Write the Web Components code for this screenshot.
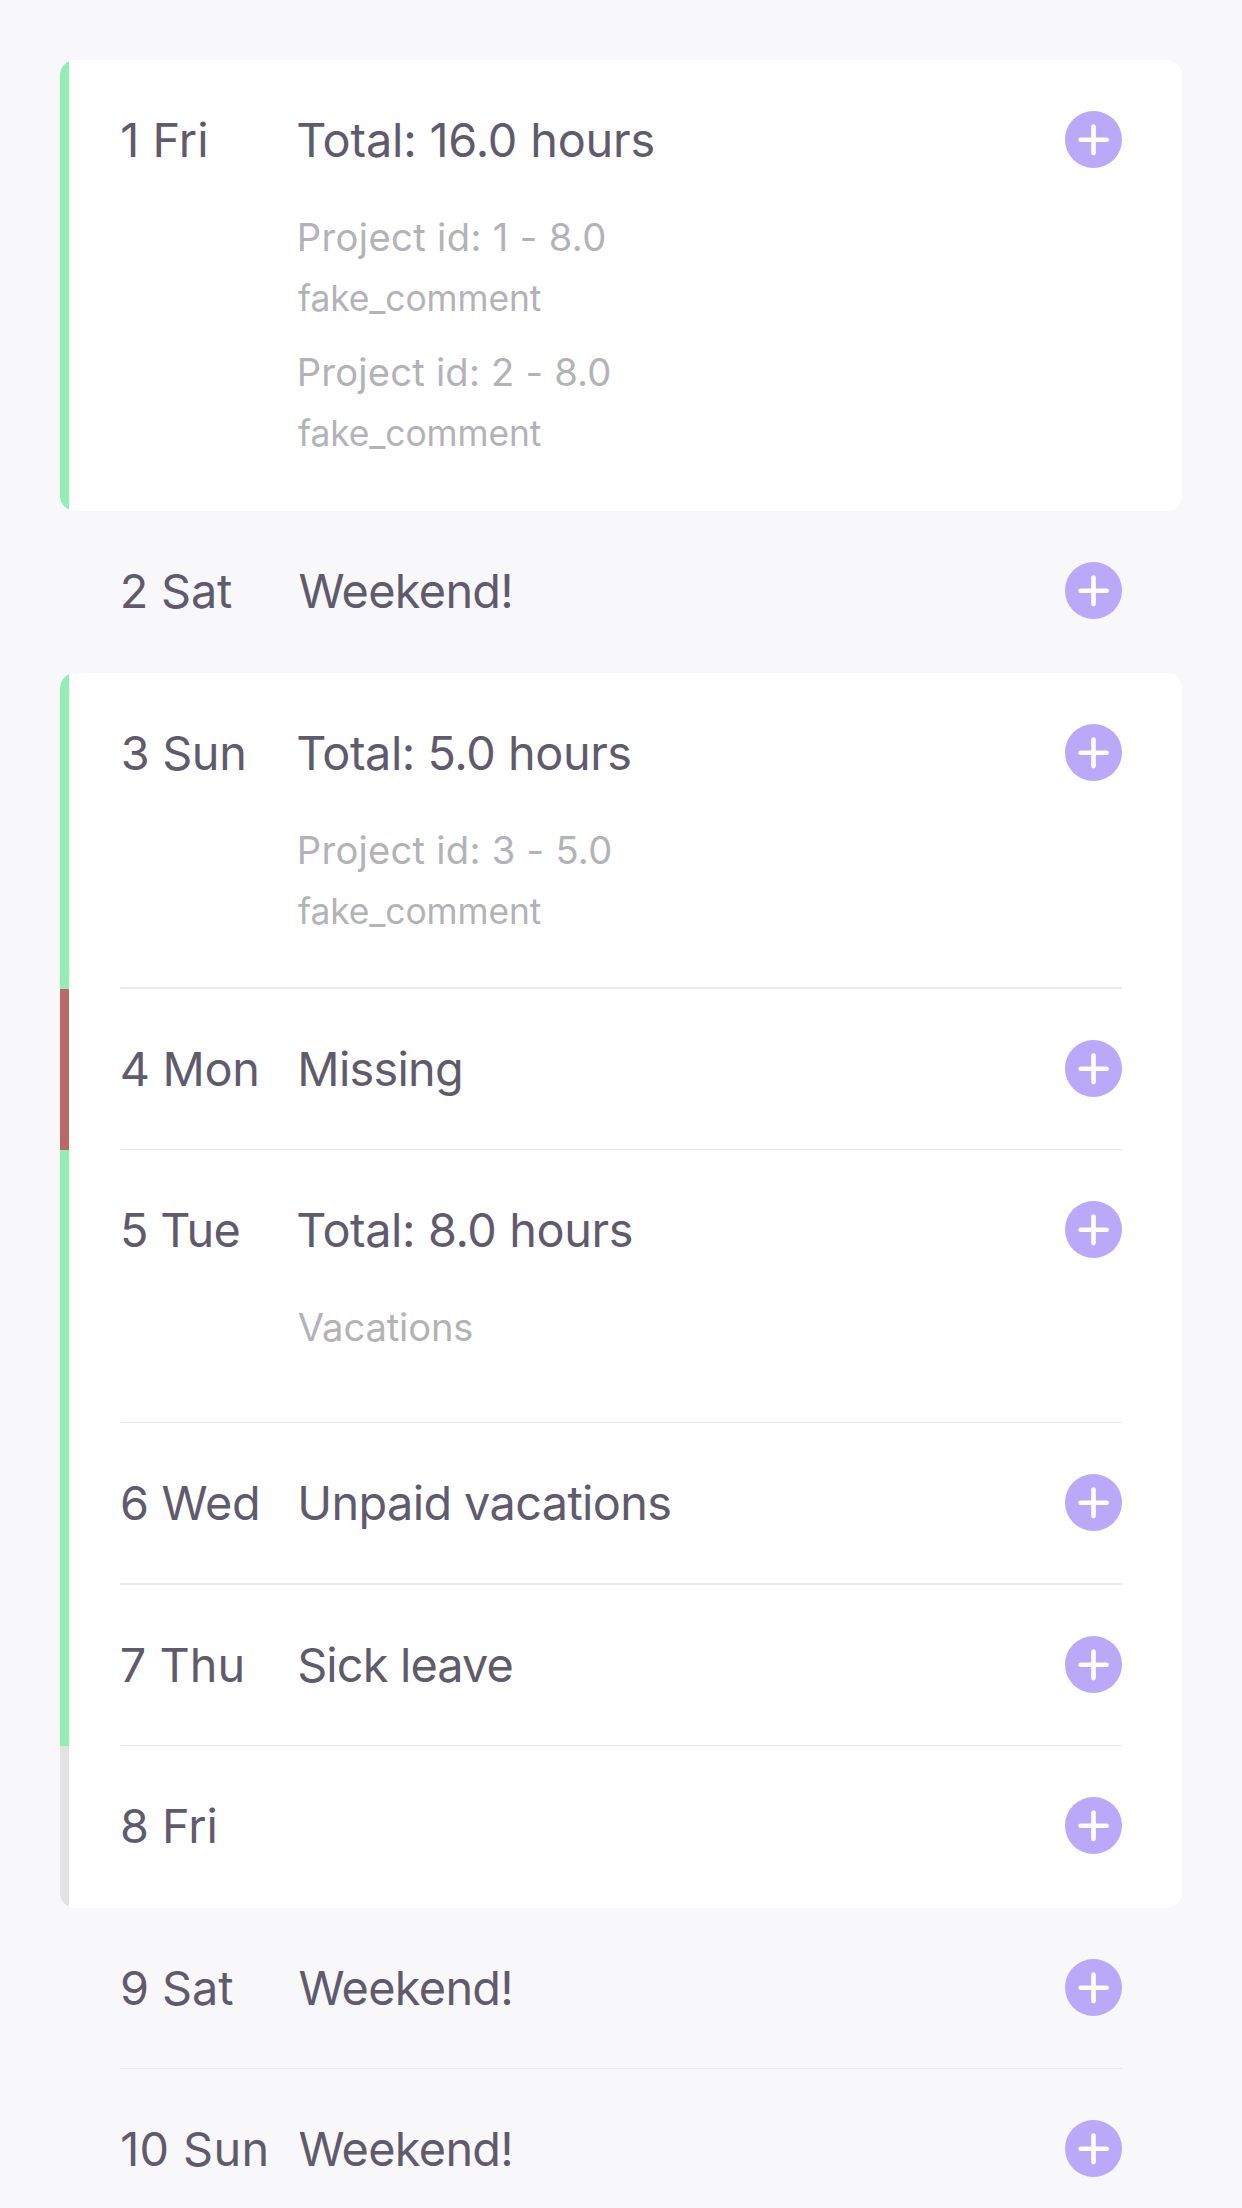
<!DOCTYPE html>
<html lang="en">
<head>
<meta charset="utf-8">
<title>Timesheet</title>
<style>
html,body{margin:0;padding:0}
body{background:#f8f8fa;height:2208px;overflow:hidden;font-family:Inter,"Liberation Sans",sans-serif;color:#5f5b6c}
</style>
</head>
<body>
<time-sheet>
  <day-group card>
    <day-row state="done" h="451">
      <ink-text slot="day" ink="1.5 85">1 Fri</ink-text>
      <ink-text slot="title" ink="0.4 355.2">Total: 16.0 hours</ink-text>
      <time-entry><ink-text ink="1.7 306.4">Project id: 1 - 8.0</ink-text><ink-text slot="comment" ink="0 242.9">fake_comment</ink-text></time-entry>
      <time-entry><ink-text ink="1.7 311.5">Project id: 2 - 8.0</ink-text><ink-text slot="comment" ink="0 242.9">fake_comment</ink-text></time-entry>
    </day-row>
  </day-group>
  <day-group>
    <day-row h="162">
      <ink-text slot="day" ink="1.7 110.6">2 Sat</ink-text>
      <ink-text slot="title" ink="1.3 212.6">Weekend!</ink-text>
    </day-row>
  </day-group>
  <day-group card>
    <day-row state="done" h="316" line="2">
      <ink-text slot="day" ink="2 122.3">3 Sun</ink-text>
      <ink-text slot="title" ink="0.4 332">Total: 5.0 hours</ink-text>
      <time-entry><ink-text ink="1.7 312.3">Project id: 3 - 5.0</ink-text><ink-text slot="comment" ink="0 242.9">fake_comment</ink-text></time-entry>
    </day-row>
    <day-row state="missing" h="161" line="1">
      <ink-text slot="day" ink="1 135.3">4 Mon</ink-text>
      <ink-text slot="title" ink="3 162.5">Missing</ink-text>
    </day-row>
    <day-row state="done" h="273" line="1">
      <ink-text slot="day" ink="2 118">5 Tue</ink-text>
      <ink-text slot="title" ink="0.4 333.4">Total: 8.0 hours</ink-text>
      <time-entry><ink-text ink="0.4 173.9">Vacations</ink-text></time-entry>
    </day-row>
    <day-row state="done" h="162" line="2">
      <ink-text slot="day" ink="1.2 136.6">6 Wed</ink-text>
      <ink-text slot="title" ink="3 372">Unpaid vacations</ink-text>
    </day-row>
    <day-row state="done" h="161" line="1">
      <ink-text slot="day" ink="1 120.6">7 Thu</ink-text>
      <ink-text slot="title" ink="1.3 214.2">Sick leave</ink-text>
    </day-row>
    <day-row state="empty" h="162">
      <ink-text slot="day" ink="1.2 94.3">8 Fri</ink-text>
    </day-row>
  </day-group>
  <day-group>
    <day-row h="161" line="1">
      <ink-text slot="day" ink="1.2 111.8">9 Sat</ink-text>
      <ink-text slot="title" ink="1.3 212.6">Weekend!</ink-text>
    </day-row>
    <day-row h="161" line="1">
      <ink-text slot="day" ink="1.4 144.6">10 Sun</ink-text>
      <ink-text slot="title" ink="1.3 212.6">Weekend!</ink-text>
    </day-row>
  </day-group>
</time-sheet>
<script>
class Base extends HTMLElement {
  constructor() {
    super();
    this.attachShadow({ mode: 'open' }).innerHTML = this.constructor.markup;
  }
}

customElements.define('time-sheet', class extends Base {
  static markup = `<style>:host{display:flex;flex-direction:column;padding:60px 60px 0}</style><slot></slot>`;
});

customElements.define('day-group', class extends Base {
  static markup = `<style>
    :host{display:flex;flex-direction:column;flex:none}
    :host([card]){background:#fff;border-radius:15px;overflow:hidden}
  </style><slot></slot>`;
});

customElements.define('add-button', class extends Base {
  static markup = `<style>:host{display:block;width:57px;height:57px;flex:none}svg{display:block}</style>
    <svg width="57" height="57" viewBox="0 0 57 57" role="img" aria-label="Add">
      <circle cx="28.5" cy="28.5" r="28.5" fill="#baa8f8"/>
      <path d="M28.5 15.6V42.1M15.6 28.7H41.6" stroke="#fff" stroke-width="4.6" stroke-linecap="round"/>
    </svg>`;
});

customElements.define('day-row', class extends Base {
  static markup = `<style>
    :host{display:flex;box-sizing:border-box;flex:none;height:var(--h)}
    .bar{width:9px;flex:none;background:var(--bar,transparent)}
    :host([state=done]){--bar:#94eeb4}
    :host([state=missing]){--bar:#bb6868}
    :host([state=empty]){--bar:#e3e3e3}
    .body{flex:1;display:flex;flex-direction:column;box-sizing:border-box;margin:0 60px 0 51px;padding-top:51px;border-bottom:var(--line,0px) solid #e9e8f4}
    .head{display:flex;height:57px;font-size:46.8px;line-height:59px}
    .day{width:177px;flex:none;margin-left:1px}
    .title{flex:1}
    .entries{display:flex;flex-direction:column;gap:21px;margin:42px 0 0 178px}
  </style>
  <div class="bar"></div>
  <div class="body">
    <div class="head"><div class="day"><slot name="day"></slot></div><div class="title"><slot name="title"></slot></div><add-button></add-button></div>
    <div class="entries"><slot></slot></div>
  </div>`;
  connectedCallback() {
    this.style.setProperty('--h', this.getAttribute('h') + 'px');
    this.style.setProperty('--line', (this.getAttribute('line') || 0) + 'px');
  }
});

customElements.define('time-entry', class extends Base {
  static markup = `<style>
    :host{display:flex;flex-direction:column;gap:9px;color:#b3b3b7}
    .name{font-size:38.2px;line-height:54px;height:54px}
    .comment{font-size:35.4px;line-height:51px;height:51px}
  </style>
  <div class="name"><slot></slot></div><div class="comment"><slot name="comment"></slot></div>`;
});

/* A single line whose glyphs span the "start end" offsets given by its ink attribute. */
customElements.define('ink-text', class extends Base {
  static markup = `<style>:host{display:block;white-space:nowrap;font-kerning:normal}</style><slot></slot>`;
  connectedCallback() {
    const text = this.textContent;
    const [start, end] = this.getAttribute('ink').split(' ').map(Number);
    const style = getComputedStyle(this);
    const ctx = document.createElement('canvas').getContext('2d');
    // Measured at ten times the size, since glyph bounds are rounded to whole pixels.
    ctx.font = `${parseFloat(style.fontSize) * 10}px ${style.fontFamily}`;
    const m = ctx.measureText(text);
    const left = m.actualBoundingBoxLeft / 10;
    const natural = m.actualBoundingBoxRight / 10 + left;
    const spacing = (end - start - natural) / (text.length - 1);
    this.style.letterSpacing = spacing.toFixed(3) + 'px';
    this.style.marginLeft = (start + left).toFixed(2) + 'px';
  }
});
</script>
</body>
</html>
